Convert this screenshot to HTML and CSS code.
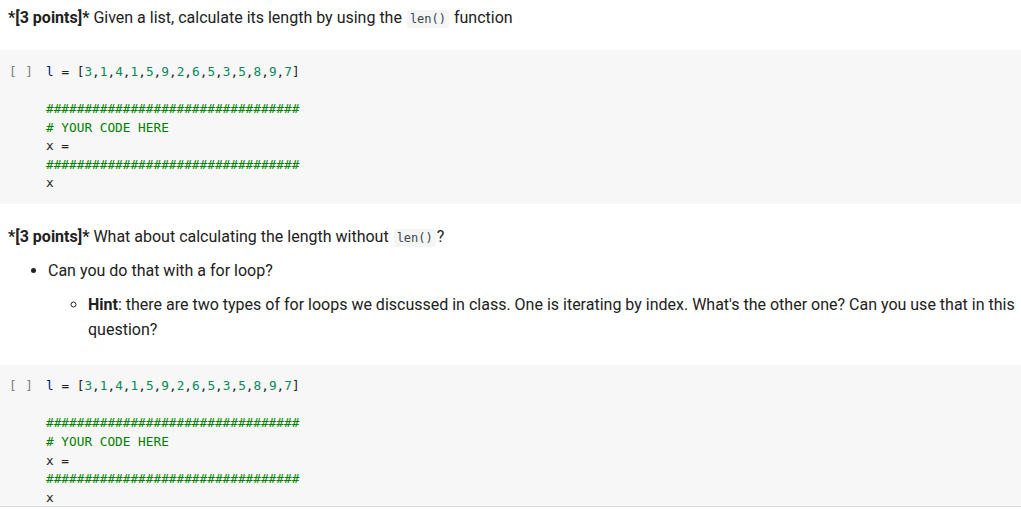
FILE: index.html
```html
<!DOCTYPE html>
<html>
<head>
<meta charset="utf-8">
<link rel="stylesheet" href="styles.css">
</head>
<body>
<div class="notebook">
  <div class="text-cell first">
    <p><b>*[3 points]*</b> Given a list, calculate its length by using the <code>len()</code> function</p>
  </div>
  <div class="code-cell first-code">
    <div class="run">[ ]</div>
    <pre class="code"><span class="v">l</span> <span class="op">=</span> [<span class="n">3</span>,<span class="n">1</span>,<span class="n">4</span>,<span class="n">1</span>,<span class="n">5</span>,<span class="n">9</span>,<span class="n">2</span>,<span class="n">6</span>,<span class="n">5</span>,<span class="n">3</span>,<span class="n">5</span>,<span class="n">8</span>,<span class="n">9</span>,<span class="n">7</span>]

<span class="c">#################################</span>
<span class="c"># YOUR CODE HERE</span>
x <span class="op">=</span>
<span class="c">#################################</span>
x</pre>
  </div>
  <div class="text-cell second">
    <p><b>*[3 points]*</b> What about calculating the length without <code>len()</code>?</p>
    <ul class="outer">
      <li>Can you do that with a for loop?
        <ul class="inner">
          <li><b>Hint</b>: there are two types of for loops we discussed in class. One is iterating by index. What's the other one? Can you use that in this question?</li>
        </ul>
      </li>
    </ul>
  </div>
  <div class="code-cell second-code">
    <div class="run">[ ]</div>
    <pre class="code"><span class="v">l</span> <span class="op">=</span> [<span class="n">3</span>,<span class="n">1</span>,<span class="n">4</span>,<span class="n">1</span>,<span class="n">5</span>,<span class="n">9</span>,<span class="n">2</span>,<span class="n">6</span>,<span class="n">5</span>,<span class="n">3</span>,<span class="n">5</span>,<span class="n">8</span>,<span class="n">9</span>,<span class="n">7</span>]

<span class="c">#################################</span>
<span class="c"># YOUR CODE HERE</span>
x <span class="op">=</span>
<span class="c">#################################</span>
x</pre>
  </div>
</div>
</body>
</html>
```
FILE: styles.css
```css
html, body {
  margin: 0;
  padding: 0;
  background: #ffffff;
}
body {
  font-family: Roboto, "Noto Sans", sans-serif;
  font-size: 16px;
  color: #212121;
  overflow: hidden;
}
.notebook {
  width: 1021px;
}
.text-cell {
  padding: 0 0 0 8px;
}
.text-cell p {
  margin: 0;
  line-height: 25px;
}
.text-cell b {
  font-weight: 700;
}
.text-cell.first {
  height: 50px;
  padding-top: 5px;
  box-sizing: border-box;
}
.text-cell.second {
  height: 161px;
  padding-top: 20px;
  box-sizing: border-box;
}
code {
  font-family: "DejaVu Sans Mono", monospace;
  font-size: 12px;
  background: #f5f5f5;
  border-radius: 3px;
  padding: 2px 3px;
  margin: 0 1px;
  color: #37474f;
}
ul {
  margin: 0;
  line-height: 25px;
}
ul.outer {
  padding-left: 40px;
  margin-top: 7px;
  list-style: disc;
}
ul.inner {
  padding-left: 40px;
  margin-top: 9px;
  list-style: circle;
}
.code-cell {
  background: #f7f7f7;
  display: flex;
  box-sizing: border-box;
}
.code-cell.first-code {
  height: 154px;
  padding-top: 13px;
}
.code-cell.second-code {
  height: 142px;
  padding-top: 12px;
  border-bottom: 1px solid #dadce0;
}
.run {
  width: 46px;
  padding-left: 9px;
  box-sizing: border-box;
  font-family: "DejaVu Sans Mono", monospace;
  font-size: 12.75px;
  line-height: 18.5px;
  color: #7f7f7f;
  letter-spacing: 0.5px;
}
.code {
  margin: 0;
  font-family: "DejaVu Sans Mono", monospace;
  font-size: 12.75px;
  line-height: 18.5px;
  color: #212121;
}
.second-code .code,
.second-code .run {
  line-height: 18.67px;
}
.code .n { color: #09885a; }
.code .c { color: #008000; }
.code .op { color: #212121; }
.code .v { color: #001080; }
```
